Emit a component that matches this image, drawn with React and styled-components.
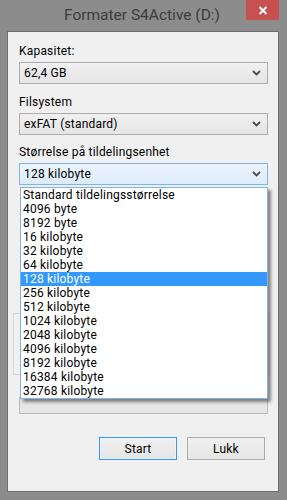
import styled, { createGlobalStyle } from 'styled-components'

const sizes = [
  'Standard tildelingsstørrelse',
  '4096 byte',
  '8192 byte',
  '16 kilobyte',
  '32 kilobyte',
  '64 kilobyte',
  '128 kilobyte',
  '256 kilobyte',
  '512 kilobyte',
  '1024 kilobyte',
  '2048 kilobyte',
  '4096 kilobyte',
  '8192 kilobyte',
  '16384 kilobyte',
  '32768 kilobyte',
]

function Chevron() {
  return (
    <svg width="9" height="6" viewBox="0 0 9 6">
      <path d="M1 1 L4.5 4.5 L8 1" fill="none" stroke="#4a4a4a" strokeWidth="1.8" />
    </svg>
  )
}

export default function App() {
  const selected = '128 kilobyte'

  return (
    <>
      <GlobalStyle />
      <Window>
        <TitleBar>
          <Title>Formater S4Active (D:)</Title>
          <CloseButton>
            <svg width="10" height="9" viewBox="0 0 10 9">
              <path d="M1.5 1 L8.5 8 M8.5 1 L1.5 8" stroke="#fff" strokeWidth="2" />
            </svg>
          </CloseButton>
        </TitleBar>
        <Client>
          <Label>Kapasitet:</Label>
          <Combo>
            <span>62,4 GB</span>
            <Chevron />
          </Combo>
          <Label $top={10}>Filsystem</Label>
          <Combo>
            <span>exFAT (standard)</span>
            <Chevron />
          </Combo>
          <Label $top={9}>Størrelse på tildelingsenhet</Label>
          <ComboWrap>
            <Combo $focused>
              <span>{selected}</span>
              <Chevron />
            </Combo>
            <List>
              {sizes.map((s) => (
                <Item key={s} $active={s === selected}>
                  {s}
                </Item>
              ))}
            </List>
          </ComboWrap>
          {/* the options group sits under the open list */}
          <GroupBox />
          <Progress />
          <Buttons>
            <Button $default>Start</Button>
            <Button>Lukk</Button>
          </Buttons>
        </Client>
      </Window>
    </>
  )
}

const GlobalStyle = createGlobalStyle`
  body {
    margin: 0;
    background: #8c8c8c;
    font-family: Roboto, "Noto Sans", sans-serif;
  }
`

const Window = styled.div`
  width: 287px;
  height: 500px;
  box-sizing: border-box;
  display: flex;
  flex-direction: column;
  padding: 0 8px 8px 7px;
  background: #8c8c8c;
`

const TitleBar = styled.div`
  position: relative;
  height: 31px;
  display: flex;
  align-items: center;
  justify-content: center;
  padding-bottom: 2px;
  box-sizing: border-box;
`

const Title = styled.div`
  font-size: 15.5px;
  color: #3c3c3c;
  margin-right: 2px;
`

const CloseButton = styled.div`
  position: absolute;
  top: 0;
  right: 0;
  width: 33px;
  height: 20px;
  background: #c75050;
  display: flex;
  align-items: center;
  justify-content: center;
`

const Client = styled.div`
  flex: 1;
  display: flex;
  flex-direction: column;
  background: #f0f0f0;
  border: 1px solid #6e6e6e;
  padding: 11px 10px 0 11px;
  font-size: 12px;
  letter-spacing: 0.2px;
  color: #000;
`

const Label = styled.div`
  height: 16px;
  line-height: 16px;
  margin-top: ${(p) => p.$top || 0}px;
  margin-bottom: 3px;
`

const ComboWrap = styled.div`
  position: relative;
  z-index: 2;
`

const Combo = styled.div`
  height: 22px;
  box-sizing: border-box;
  display: flex;
  align-items: center;
  justify-content: space-between;
  padding: 0 6px 0 4px;
  border: 1px solid ${(p) => (p.$focused ? '#7eb4ea' : '#acacac')};
  background: ${(p) =>
    p.$focused
      ? 'linear-gradient(#ecf4fc, #dcecfc)'
      : 'linear-gradient(#f0f0f0, #e5e5e5)'};
`

const List = styled.div`
  position: absolute;
  top: 24px;
  left: 1px;
  right: 0;
  background: #fff;
  border: 1px solid #7eb4ea;
  box-shadow: 3px 3px 3px rgba(0, 0, 0, 0.45);
`

const Item = styled.div`
  height: 14px;
  line-height: 14px;
  padding-left: 2px;
  white-space: nowrap;
  background: ${(p) => (p.$active ? '#3399ff' : 'transparent')};
  color: ${(p) => (p.$active ? '#fff' : '#000')};
`

const GroupBox = styled.div`
  margin: 128px -2px 0 -6px;
  height: 62px;
  box-sizing: border-box;
  border: 1px solid #d5d5d5;
`

const Progress = styled.div`
  margin-top: 22px;
  height: 17px;
  border: 1px solid #bcbcbc;
  background: #e6e6e6;
  box-sizing: border-box;
`

const Buttons = styled.div`
  display: flex;
  justify-content: flex-end;
  gap: 10px;
  margin-top: 23px;
  padding-right: 3px;
`

const Button = styled.div`
  width: 78px;
  height: 23px;
  box-sizing: border-box;
  display: flex;
  align-items: center;
  justify-content: center;
  border: 1px solid ${(p) => (p.$default ? '#3399ff' : '#acacac')};
  background: linear-gradient(#f0f0f0, #e5e5e5);
  box-shadow: ${(p) => (p.$default ? 'inset 0 0 0 1px #e8f2fc' : 'none')};
`
